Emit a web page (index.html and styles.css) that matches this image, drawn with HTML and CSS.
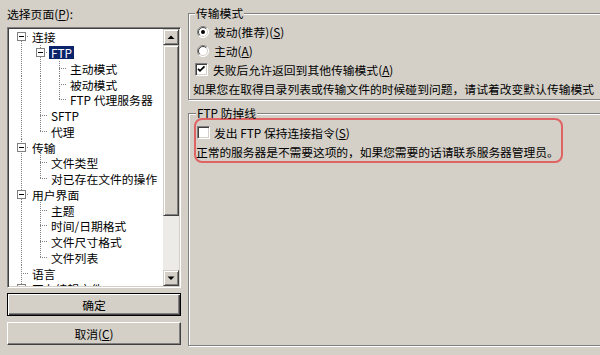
FILE: index.html
```html
<!DOCTYPE html>
<html lang="zh-CN">
<head>
<meta charset="utf-8">
<title>设置</title>
<link rel="stylesheet" href="styles.css">
</head>
<body>
<div class="win">
  <div class="left">
    <div class="cap">选择页面(<u>P</u>):</div>
    <div class="treebox">
      <div class="tree">
        <div class="row"><span class="g f"><i class="bx"></i></span><span class="lbl">连接</span></div>
        <div class="row"><span class="g v"></span><span class="g t"><i class="bx"></i></span><span class="lbl sel">FTP</span></div>
        <div class="row"><span class="g v"></span><span class="g v"></span><span class="g t"></span><span class="lbl">主动模式</span></div>
        <div class="row"><span class="g v"></span><span class="g v"></span><span class="g t"></span><span class="lbl">被动模式</span></div>
        <div class="row"><span class="g v"></span><span class="g v"></span><span class="g l"></span><span class="lbl">FTP 代理服务器</span></div>
        <div class="row"><span class="g v"></span><span class="g t"></span><span class="lbl">SFTP</span></div>
        <div class="row"><span class="g v"></span><span class="g l"></span><span class="lbl">代理</span></div>
        <div class="row"><span class="g t"><i class="bx"></i></span><span class="lbl">传输</span></div>
        <div class="row"><span class="g v"></span><span class="g t"></span><span class="lbl">文件类型</span></div>
        <div class="row"><span class="g v"></span><span class="g l"></span><span class="lbl">对已存在文件的操作</span></div>
        <div class="row"><span class="g t"><i class="bx"></i></span><span class="lbl">用户界面</span></div>
        <div class="row"><span class="g v"></span><span class="g t"></span><span class="lbl">主题</span></div>
        <div class="row"><span class="g v"></span><span class="g t"></span><span class="lbl">时间/日期格式</span></div>
        <div class="row"><span class="g v"></span><span class="g t"></span><span class="lbl">文件尺寸格式</span></div>
        <div class="row"><span class="g v"></span><span class="g l"></span><span class="lbl">文件列表</span></div>
        <div class="row"><span class="g t"></span><span class="lbl">语言</span></div>
        <div class="row"><span class="g t"><i class="bx"></i></span><span class="lbl">正在编辑文件</span></div>
      </div>
      <div class="sb">
        <div class="sbtn"><svg width="14" height="14" viewBox="0 0 14 14"><polygon points="3.5,9 10.5,9 7,5.5" fill="#000"/></svg></div>
        <div class="thumb"></div>
        <div class="track"></div>
        <div class="sbtn"><svg width="14" height="14" viewBox="0 0 14 14"><polygon points="3.5,5.5 10.5,5.5 7,9" fill="#000"/></svg></div>
      </div>
    </div>
    <div class="btn def">确定</div>
    <div class="btn cancel">取消(<u>C</u>)</div>
  </div>

  <div class="right">
    <fieldset class="grp g1">
      <legend>传输模式</legend>
      <div class="opt"><svg class="rd" width="12" height="12" viewBox="0 0 12 12"><circle cx="6" cy="6" r="5.5" fill="#fff"/><path d="M2.1 9.9A5.5 5.5 0 0 1 9.9 2.1" fill="none" stroke="#808080"/><path d="M9.9 2.1A5.5 5.5 0 0 1 2.1 9.9" fill="none" stroke="#fff"/><path d="M2.8 9.2A4.5 4.5 0 0 1 9.2 2.8" fill="none" stroke="#404040"/><path d="M9.2 2.8A4.5 4.5 0 0 1 2.8 9.2" fill="none" stroke="#d4d0c8"/><circle cx="6" cy="6" r="2" fill="#000"/></svg><span>被动(推荐)(<u>S</u>)</span></div>
      <div class="opt"><svg class="rd" width="12" height="12" viewBox="0 0 12 12"><circle cx="6" cy="6" r="5.5" fill="#fff"/><path d="M2.1 9.9A5.5 5.5 0 0 1 9.9 2.1" fill="none" stroke="#808080"/><path d="M9.9 2.1A5.5 5.5 0 0 1 2.1 9.9" fill="none" stroke="#fff"/><path d="M2.8 9.2A4.5 4.5 0 0 1 9.2 2.8" fill="none" stroke="#404040"/><path d="M9.2 2.8A4.5 4.5 0 0 1 2.8 9.2" fill="none" stroke="#d4d0c8"/></svg><span>主动(<u>A</u>)</span></div>
      <div class="opt chk"><span class="cb"><svg width="11" height="11" viewBox="0 0 11 11"><path d="M2 4.8l2 2 4.5-4.5" fill="none" stroke="#000" stroke-width="1.7"/></svg></span><span>失败后允许返回到其他传输模式(<u>A</u>)</span></div>
      <div class="opt txt">如果您在取得目录列表或传输文件的时候碰到问题，请试着改变默认传输模式</div>
    </fieldset>

    <fieldset class="grp g2">
      <legend>FTP 防掉线</legend>
      <div class="hl">
        <div class="opt kc"><span class="cb"></span><span>发出 FTP 保持连接指令(<u>S</u>)</span></div>
        <div class="opt note">正常的服务器是不需要这项的，如果您需要的话请联系服务器管理员。</div>
      </div>
    </fieldset>
  </div>
</div>
</body>
</html>
```

FILE: styles.css
```css
html, body {
  margin: 0;
  padding: 0;
}
body {
  width: 600px;
  height: 355px;
  overflow: hidden;
  background: #d4d0c8;
  color: #000;
  font-family: "Noto Sans CJK SC", "Noto Sans", sans-serif;
  font-size: 11.8px;
}
u { text-decoration: underline; text-underline-offset: 1px; }

.win {
  display: flex;
  height: 355px;
}

/* left column */
.left {
  flex: none;
  width: 174px;
  margin-left: 7px;
  display: flex;
  flex-direction: column;
}
.cap {
  height: 16px;
  line-height: 16px;
  margin-top: 6px;
}
.treebox {
  box-sizing: border-box;
  height: 261px;
  margin-top: 5px;
  display: flex;
  border: 1px solid;
  border-color: #808080 #fff #fff #808080;
  box-shadow: inset 1px 1px #404040, inset -1px -1px #d4d0c8;
  padding: 1px;
  background: #fff;
}
.tree {
  flex: 1;
  overflow: hidden;
  min-width: 0;
}
.row {
  height: 15.75px;
  display: flex;
  align-items: center;
  white-space: nowrap;
}
.g {
  flex: none;
  width: 19px;
  height: 100%;
  display: flex;
  align-items: center;
  background-repeat: no-repeat;
  --dv: repeating-linear-gradient(to bottom, #808080 0 1px, transparent 1px 2px);
  --dh: repeating-linear-gradient(to right, #808080 0 1px, transparent 1px 2px);
}
.v {
  background-image: var(--dv);
  background-size: 1px 100%;
  background-position: 12px 0;
}
.t {
  background-image: var(--dv), var(--dh);
  background-size: 1px 100%, 7px 1px;
  background-position: 12px 0, 12px 50%;
}
.l {
  background-image: var(--dv), var(--dh);
  background-size: 1px 50%, 7px 1px;
  background-position: 12px 0, 12px 50%;
}
.f {
  background-image: var(--dv), var(--dh);
  background-size: 1px 50%, 7px 1px;
  background-position: 12px 100%, 12px 50%;
}
.bx {
  box-sizing: border-box;
  width: 9px;
  height: 9px;
  margin-left: 8px;
  border: 1px solid #808080;
  background: #fff linear-gradient(#000, #000) center / 5px 1px no-repeat;
}
.lbl {
  margin-left: 2px;
  padding: 0 2px;
  height: 13px;
  line-height: 13px;
}
.sel {
  background: #0a246a;
  color: #fff;
}

/* scrollbar */
.sb {
  flex: none;
  width: 16px;
  display: flex;
  flex-direction: column;
}
.sbtn, .thumb {
  box-sizing: border-box;
  background: #d4d0c8;
  border: 1px solid;
  border-color: #d4d0c8 #404040 #404040 #d4d0c8;
  box-shadow: inset 1px 1px #fff, inset -1px -1px #808080;
}
.sbtn {
  height: 16px;
  display: flex;
  align-items: center;
  justify-content: center;
}
.sbtn svg { display: block; }
.thumb {
  height: 171px;
}
.track {
  flex: 1;
  background: #ecebe7;
}

/* buttons */
.btn {
  box-sizing: border-box;
  height: 23px;
  display: flex;
  align-items: center;
  justify-content: center;
  border: 1px solid;
  border-color: #fff #404040 #404040 #fff;
  box-shadow: inset -1px -1px #808080;
}
.btn.def {
  margin-top: 5px;
  border-color: #000;
  box-shadow: inset 1px 1px #fff, inset -1px -1px #404040, inset -2px -2px #808080;
}
.btn.cancel {
  margin-top: 6px;
}

/* right column */
.right {
  flex: none;
  box-sizing: border-box;
  width: 440px;
  height: 355px;
  margin-left: 7px;
  padding: 6px 0 9px;
  display: flex;
  flex-direction: column;
}
.grp {
  margin: 0;
  min-width: 0;
  border: 1px solid #808080;
  box-shadow: inset 1px 1px #fff, 1px 1px #fff;
  padding: 2px 0 1px 4px;
}
.grp legend {
  padding: 0 1px;
  margin-left: 2px;
  height: 14px;
  line-height: 14px;
  background: #d4d0c8;
}
.g2 {
  flex: 1;
  margin-top: 8px;
  padding-top: 0;
}
.g2 legend {
  height: 10px;
  line-height: 10px;
  margin-left: 3px;
}
.opt {
  height: 19px;
  display: flex;
  align-items: center;
  gap: 5px;
  white-space: nowrap;
}
.rd {
  flex: none;
  display: block;
  margin-left: 4px;
}
.cb {
  flex: none;
  box-sizing: border-box;
  width: 13px;
  height: 13px;
  border: 1px solid;
  border-color: #808080 #fff #fff #808080;
  box-shadow: inset 1px 1px #404040, inset -1px -1px #d4d0c8;
  background: #fff;
  display: flex;
  align-items: center;
  justify-content: center;
}
.cb svg { display: block; }
.chk .cb { margin-left: 2px; }

.hl {
  box-sizing: border-box;
  width: 369px;
  margin-left: 1px;
  border: 2px solid #e06363;
  border-radius: 8px;
  padding: 3px 0 0;
}
.kc {
  gap: 4px;
}
.kc .cb { margin-left: 1px; }
.note {
  letter-spacing: -0.1px;
}
```
